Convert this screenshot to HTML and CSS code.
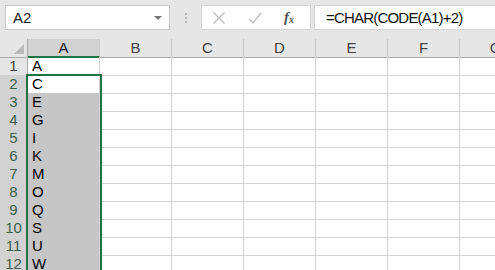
FILE: index.html
```html
<!DOCTYPE html>
<html lang="ja">
<head>
  <meta charset="UTF-8" />
  <title>Book1 - Excel</title>
  <link rel="stylesheet" href="styles.css">
</head>
<body>

  <div class="toolbar">
    <div class="name-box">
      <span>A2</span>
      <span class="drop"></span>
    </div>
    <div class="grip"><i></i><i></i><i></i></div>
    <div class="fx-buttons">
      <svg width="14" height="14" viewBox="0 0 14 14"><path d="M1.5 1.5 L12.5 12.5 M12.5 1.5 L1.5 12.5" stroke="#bdbdbd" stroke-width="1.3" fill="none"/></svg>
      <svg width="16" height="14" viewBox="0 0 16 14"><path d="M2 8 L6 12 L14 2" stroke="#bdbdbd" stroke-width="1.3" fill="none"/></svg>
      <span class="fx">f<sub>x</sub></span>
    </div>
    <div class="formula">=CHAR(CODE(A1)+2)</div>
  </div>

  <div class="sheet">
    <div class="grid">
      <div class="corner"><span class="tri"></span></div>
      <div class="col-head sel">A</div>
      <div class="col-head">B</div>
      <div class="col-head">C</div>
      <div class="col-head">D</div>
      <div class="col-head">E</div>
      <div class="col-head">F</div>
      <div class="col-head">G</div>
    </div>
    <div id="rows"></div>
    <div class="selection"></div>
  </div>

  <script>
    const letters = ["A", "C", "E", "G", "I", "K", "M", "O", "Q", "S", "U", "W"];
    const rows = document.getElementById("rows");

    letters.forEach((ch, i) => {
      const r = i + 1;
      const row = document.createElement("div");
      row.className = "grid";
      let html = `<div class="row-head${r > 1 ? " sel" : ""}">${r}</div>`;
      let cls = "cell";
      if (r > 2) cls += " picked";
      html += `<div class="${cls}">${ch}</div>`;
      for (let c = 0; c < 6; c++) html += `<div class="cell"></div>`;
      row.innerHTML = html;
      rows.appendChild(row);
    });
  </script>

</body>
</html>
```

FILE: styles.css
```css
* { margin: 0; padding: 0; box-sizing: border-box; }
:root {
  --green: #217346;
  --bar: #e6e6e6;
  --line: #d4d4d4;
}
html {
  overflow: hidden;
}
body {
  width: 495px;
  height: 270px;
  overflow: hidden;
  background: white;
  font-family: "Liberation Sans", Arial, "Noto Sans CJK JP", sans-serif;
  color: #000;
}
.toolbar {
  display: flex;
  align-items: center;
  height: 39px;
  padding: 5px 0 9px 5px;
  background: var(--bar);
}
.name-box {
  display: flex;
  align-items: center;
  justify-content: space-between;
  width: 165px;
  height: 25px;
  padding: 0 7px 0 7px;
  background: white;
  border: 1px solid #c8c8c8;
  font-size: 15px;
  color: #222;
}
.drop {
  width: 0;
  height: 0;
  border-left: 4px solid transparent;
  border-right: 4px solid transparent;
  border-top: 4px solid #777;
}
.grip {
  display: flex;
  flex-direction: column;
  gap: 2px;
  width: 31px;
  align-items: center;
}
.grip i {
  width: 2px;
  height: 2px;
  background: #b4b4b4;
}
.fx-buttons {
  display: flex;
  align-items: center;
  gap: 21px;
  width: 110px;
  height: 25px;
  padding-left: 10px;
  background: white;
  border: 1px solid #d4d4d4;
}
.fx {
  font-family: "Liberation Serif", serif;
  font-style: italic;
  font-weight: bold;
  font-size: 15px;
  color: #555;
}
.fx sub {
  font-size: 10px;
  vertical-align: -1px;
}
.formula {
  flex: 1;
  height: 25px;
  margin-left: 3px;
  padding: 3px 0 0 11px;
  background: white;
  border: 1px solid #d4d4d4;
  border-right: none;
  font-size: 15px;
  letter-spacing: -0.8px;
  color: #111;
}
.sheet {
  position: relative;
}
.grid {
  display: grid;
  grid-template-columns: 28px repeat(7, 72px);
  height: 18px;
}
.corner, .col-head {
  background: var(--bar);
  border-right: 1px solid #c8c8c8;
  border-bottom: 1px solid #ababab;
}
.corner {
  position: relative;
  border-right-color: #ababab;
}
.tri {
  position: absolute;
  right: 3px;
  bottom: 3px;
  width: 0;
  height: 0;
  border-left: 10px solid transparent;
  border-bottom: 10px solid #b9b9b9;
}
.col-head {
  text-align: center;
  font-size: 15px;
  line-height: 17px;
  color: #444;
}
.col-head.sel {
  background: #d2d2d2;
  border-bottom: 2px solid var(--green);
  color: #222;
}
.row-head {
  background: var(--bar);
  border-right: 1px solid #ababab;
  border-bottom: 1px solid #c8c8c8;
  text-align: center;
  font-size: 15px;
  line-height: 18px;
  color: #444;
}
.row-head.sel {
  background: #d2d2d2;
  color: #3e5f4c;
}
.cell {
  border-right: 1px solid var(--line);
  border-bottom: 1px solid var(--line);
  padding-left: 4px;
  font-size: 15px;
  line-height: 18px;
}
.cell.picked {
  background: #c6c6c6;
}
.selection {
  position: absolute;
  left: 26px;
  top: 35px;
  width: 76px;
  height: 240px;
  border: 2px solid var(--green);
}
```
